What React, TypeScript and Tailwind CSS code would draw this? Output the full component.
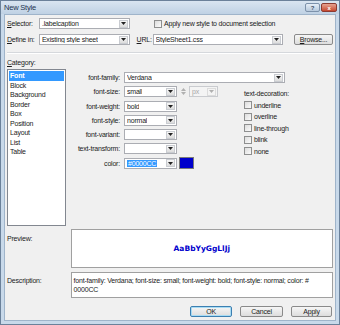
import type { ReactNode } from 'react'

const categories = ['Font', 'Block', 'Background', 'Border', 'Box', 'Position', 'Layout', 'List', 'Table']
const decorations = ['underline', 'overline', 'line-through', 'blink', 'none']

function Arrow() {
  return (
    <div className="flex h-[8px] w-[9px] items-center justify-center border border-[#c9ccd1] bg-gradient-to-b from-[#f7f7f7] to-[#dcdcdc]">
      <svg width="5" height="3" viewBox="0 0 5 3">
        <polygon points="0,0 5,0 2.5,3" fill="#222" />
      </svg>
    </div>
  )
}

function Combo({ w, value, children }: { w: string; value?: string; children?: ReactNode }) {
  return (
    <div className={`flex h-[11px] ${w} items-center justify-between border border-[#abadb3] bg-white pl-[2px] pr-[1px]`}>
      <span className="truncate">{children ?? value}</span>
      <Arrow />
    </div>
  )
}

function Check() {
  return <div className="h-[8px] w-[8px] shrink-0 border border-[#8e8f8f] bg-gradient-to-br from-[#dcdcdc] to-[#fbfbfb]" />
}

function Button({ label, primary }: { label: string; primary?: boolean }) {
  return (
    <div
      className={`flex h-[11px] items-center justify-center rounded-[2px] border bg-gradient-to-b from-[#f6f6f6] to-[#dddddd] ${
        primary ? 'border-[#3c7fb1] shadow-[inset_0_0_0_1px_#a8dcf4]' : 'border-[#8a8a8a]'
      }`}
      style={{ width: label === 'Cancel' ? 43 : label === 'OK' ? 42 : 41 }}
    >
      {label}
    </div>
  )
}

const fields = [
  { label: 'font-family:', value: 'Verdana' },
  { label: 'font-size:', value: 'small' },
  { label: 'font-weight:', value: 'bold' },
  { label: 'font-style:', value: 'normal' },
  { label: 'font-variant:', value: '' },
  { label: 'text-transform:', value: '' },
  { label: 'color:', value: '#0000CC' },
]

export default function App() {
  return (
    <div className="flex h-[325px] w-[340px] flex-col border border-[#6b819a] bg-[#c8d9ea] text-[7px] leading-none tracking-[-0.2px] text-[#1b1b1b] [font-family:'Liberation_Sans',Arial,sans-serif]">
      {/* title bar */}
      <div className="flex h-[13px] items-center justify-between bg-gradient-to-b from-[#d9e5f1] to-[#bfd1e4] pl-[3px] pr-[2px]">
        <span className="text-[7.5px] text-[#1e3550]">New Style</span>
        <div className="flex gap-[1px]">
          <div className="flex h-[9px] w-[15px] items-center justify-center rounded-[2px] border border-[#7d92ab] bg-gradient-to-b from-[#e6eef7] to-[#b7c9dc] text-[6px] font-bold text-[#3b4e66]">
            ?
          </div>
          <div className="flex h-[9px] w-[16px] items-center justify-center rounded-[2px] border border-[#8c3a31] bg-gradient-to-b from-[#e5a190] to-[#c5472f] text-[6px] font-bold text-white">
            x
          </div>
        </div>
      </div>

      {/* body */}
      <div className="mx-[3px] mb-[3px] flex flex-1 flex-col border border-[#9fb4ca] bg-[#f0f0f0] pl-[2px] pr-[2px]">
        <div className="mt-[3px] flex h-[11px] items-center">
          <span className="w-[32px]"><u>S</u>elector:</span>
          <Combo w="w-[91px]" value=".labelcaption" />
          <div className="ml-[24px] flex items-center gap-[2px]">
            <Check />
            <span>Apply new style to document selection</span>
          </div>
        </div>

        <div className="mt-[5px] flex h-[11px] items-center">
          <span className="w-[32px]"><u>D</u>efine in:</span>
          <Combo w="w-[91px]" value="Existing style sheet" />
          <span className="ml-[7px] w-[16px]"><u>U</u>RL:</span>
          <Combo w="w-[131px]" value="StyleSheet1.css" />
          <div className="ml-[11px] flex h-[11px] w-[39px] items-center justify-center rounded-[2px] border border-[#8a8a8a] bg-gradient-to-b from-[#f6f6f6] to-[#dddddd]">
            <span><u>B</u>rowse...</span>
          </div>
        </div>

        <div className="mt-[7px] border-t border-b border-t-[#d5d8dc] border-b-white" />

        <span className="mt-[5px]"><u>C</u>ategory:</span>

        <div className="mt-[3px] flex">
          <div className="flex h-[157px] w-[59px] flex-col border border-[#828790] bg-white p-[1px]">
            {categories.map((c, i) => (
              <div
                key={c}
                className={`flex h-[9.5px] items-center pl-[1px] ${i === 0 ? 'bg-[#3399ff] font-bold text-white' : ''}`}
              >
                {c}
              </div>
            ))}
          </div>

          <div className="ml-[5px] flex pt-[3px]">
            <div className="flex flex-col gap-[3.3px]">
              {fields.map((f, i) => (
                <div key={f.label} className="flex h-[11px] items-center">
                  <span className="w-[49px] text-right">{f.label}</span>
                  <div className="ml-[4px] flex items-center">
                    {i === 0 ? (
                      <Combo w="w-[161px]" value={f.value} />
                    ) : i === 6 ? (
                      <>
                        <Combo w="w-[53px]">
                          <span className="bg-[#3399ff] px-[1px] text-white">{f.value}</span>
                        </Combo>
                        <div className="ml-[2px] h-[12px] w-[15px] border border-[#7a7a7a] bg-[#0000cc]" />
                      </>
                    ) : (
                      <>
                        <Combo w="w-[53px]" value={f.value} />
                        {i === 1 && (
                          <>
                            <div className="ml-[3px] flex h-[10px] w-[6px] flex-col items-center justify-center gap-[1px]">
                              <svg width="5" height="3" viewBox="0 0 5 3"><polygon points="0,3 5,3 2.5,0" fill="#b0b0b0" /></svg>
                              <svg width="5" height="3" viewBox="0 0 5 3"><polygon points="0,0 5,0 2.5,3" fill="#b0b0b0" /></svg>
                            </div>
                            <div className="ml-[3px] flex h-[11px] w-[29px] items-center justify-between border border-[#c9cbcf] bg-[#f4f4f4] pl-[2px] pr-[1px] text-[#a8a8a8]">
                              <span>px</span>
                              <div className="flex h-[8px] w-[9px] items-center justify-center border border-[#dcdcdc]">
                                <svg width="5" height="3" viewBox="0 0 5 3"><polygon points="0,0 5,0 2.5,3" fill="#b0b0b0" /></svg>
                              </div>
                            </div>
                          </>
                        )}
                      </>
                    )}
                  </div>
                </div>
              ))}
            </div>

            <div className="ml-[-41px] mt-[18px] flex flex-col">
              <span>text-decoration:</span>
              <div className="mt-[4px] flex flex-col gap-[3.6px]">
                {decorations.map((d) => (
                  <div key={d} className="flex h-[8px] items-center gap-[2px]">
                    <Check />
                    <span>{d}</span>
                  </div>
                ))}
              </div>
            </div>
          </div>
        </div>

        <div className="mt-[3px] flex">
          <span className="w-[64px] pt-[6px]">Preview:</span>
          <div className="flex h-[39px] w-[264px] items-center justify-center border border-[#a0a0a0] bg-white">
            <span className="text-[7.5px] font-bold tracking-normal text-[#0000cc] [font-family:'DejaVu_Sans',Verdana,sans-serif]">AaBbYyGgLlJj</span>
          </div>
        </div>

        <div className="mt-[4px] flex">
          <span className="w-[64px] pt-[5px]">Description:</span>
          <div className="h-[26px] w-[264px] border border-[#a0a0a0] bg-white px-[2px] pt-[3px] leading-[9px]">
            font-family: Verdana; font-size: small; font-weight: bold; font-style: normal; color: #
            <br />
            0000CC
          </div>
        </div>

        <div className="mt-[8px] flex justify-end gap-[8px] pr-[1px]">
          <Button label="OK" primary />
          <Button label="Cancel" />
          <Button label="Apply" />
        </div>
      </div>
    </div>
  )
}
